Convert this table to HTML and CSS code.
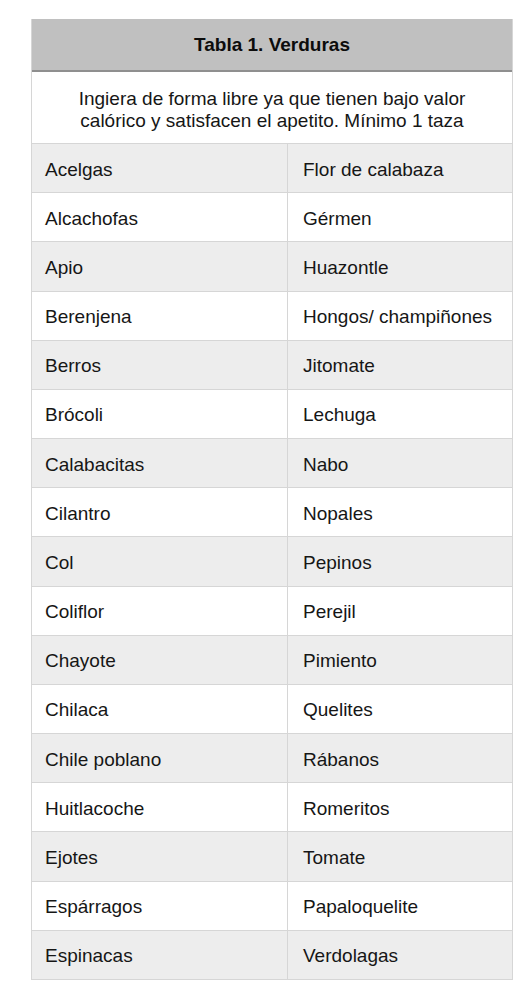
FILE: index.html
```
<!DOCTYPE html>
<html lang="es">
<head>
<meta charset="utf-8">
<title>Tabla 1. Verduras</title>
<link rel="stylesheet" href="styles.css">
</head>
<body>
<div class="page">
  <div class="tabla">
    <div class="titulo">Tabla 1. Verduras</div>
    <div class="desc">Ingiera de forma libre ya que tienen bajo valor<br>calórico y satisfacen el apetito. Mínimo 1 taza</div>
    <div class="grid">
      <div class="cell odd">Acelgas</div><div class="cell odd r">Flor de calabaza</div>
      <div class="cell">Alcachofas</div><div class="cell r">Gérmen</div>
      <div class="cell odd">Apio</div><div class="cell odd r">Huazontle</div>
      <div class="cell">Berenjena</div><div class="cell r">Hongos/ champiñones</div>
      <div class="cell odd">Berros</div><div class="cell odd r">Jitomate</div>
      <div class="cell">Brócoli</div><div class="cell r">Lechuga</div>
      <div class="cell odd">Calabacitas</div><div class="cell odd r">Nabo</div>
      <div class="cell">Cilantro</div><div class="cell r">Nopales</div>
      <div class="cell odd">Col</div><div class="cell odd r">Pepinos</div>
      <div class="cell">Coliflor</div><div class="cell r">Perejil</div>
      <div class="cell odd">Chayote</div><div class="cell odd r">Pimiento</div>
      <div class="cell">Chilaca</div><div class="cell r">Quelites</div>
      <div class="cell odd">Chile poblano</div><div class="cell odd r">Rábanos</div>
      <div class="cell">Huitlacoche</div><div class="cell r">Romeritos</div>
      <div class="cell odd">Ejotes</div><div class="cell odd r">Tomate</div>
      <div class="cell">Espárragos</div><div class="cell r">Papaloquelite</div>
      <div class="cell odd">Espinacas</div><div class="cell odd r">Verdolagas</div>
    </div>
  </div>
</div>
</body>
</html>
```
FILE: styles.css
```
html, body {
  margin: 0;
  padding: 0;
  background: #ffffff;
}
.page {
  padding: 19px 0 0 31px;
  font-family: "Liberation Sans", Arial, Helvetica, sans-serif;
  color: #161616;
}
.tabla {
  width: 482px;
  box-sizing: border-box;
  border-left: 1px solid #d6d6d6;
  border-right: 1px solid #d6d6d6;
}
.titulo {
  height: 51px;
  background: #c0c0c0;
  border-bottom: 2px solid #8f8f8f;
  display: flex;
  align-items: center;
  justify-content: center;
  font-weight: bold;
  font-size: 19px;
  color: #0c0c0c;
}
.desc {
  display: flex;
  align-items: center;
  justify-content: center;
  text-align: center;
  font-size: 19px;
  line-height: 22px;
  padding-top: 5px;
  box-sizing: border-box;
  height: 72px;
  border-bottom: 1px solid #d6d6d6;
}
.grid {
  display: grid;
  grid-template-columns: 255px 1fr;
  grid-auto-rows: 49.18px;
}
.cell {
  display: flex;
  align-items: center;
  padding-left: 13px;
  padding-top: 3px;
  font-size: 19px;
  border-bottom: 1px solid #d6d6d6;
  box-sizing: border-box;
}
.cell.r {
  border-left: 1px solid #d6d6d6;
  padding-left: 15px;
}
.cell.odd {
  background: #ededed;
}
```
